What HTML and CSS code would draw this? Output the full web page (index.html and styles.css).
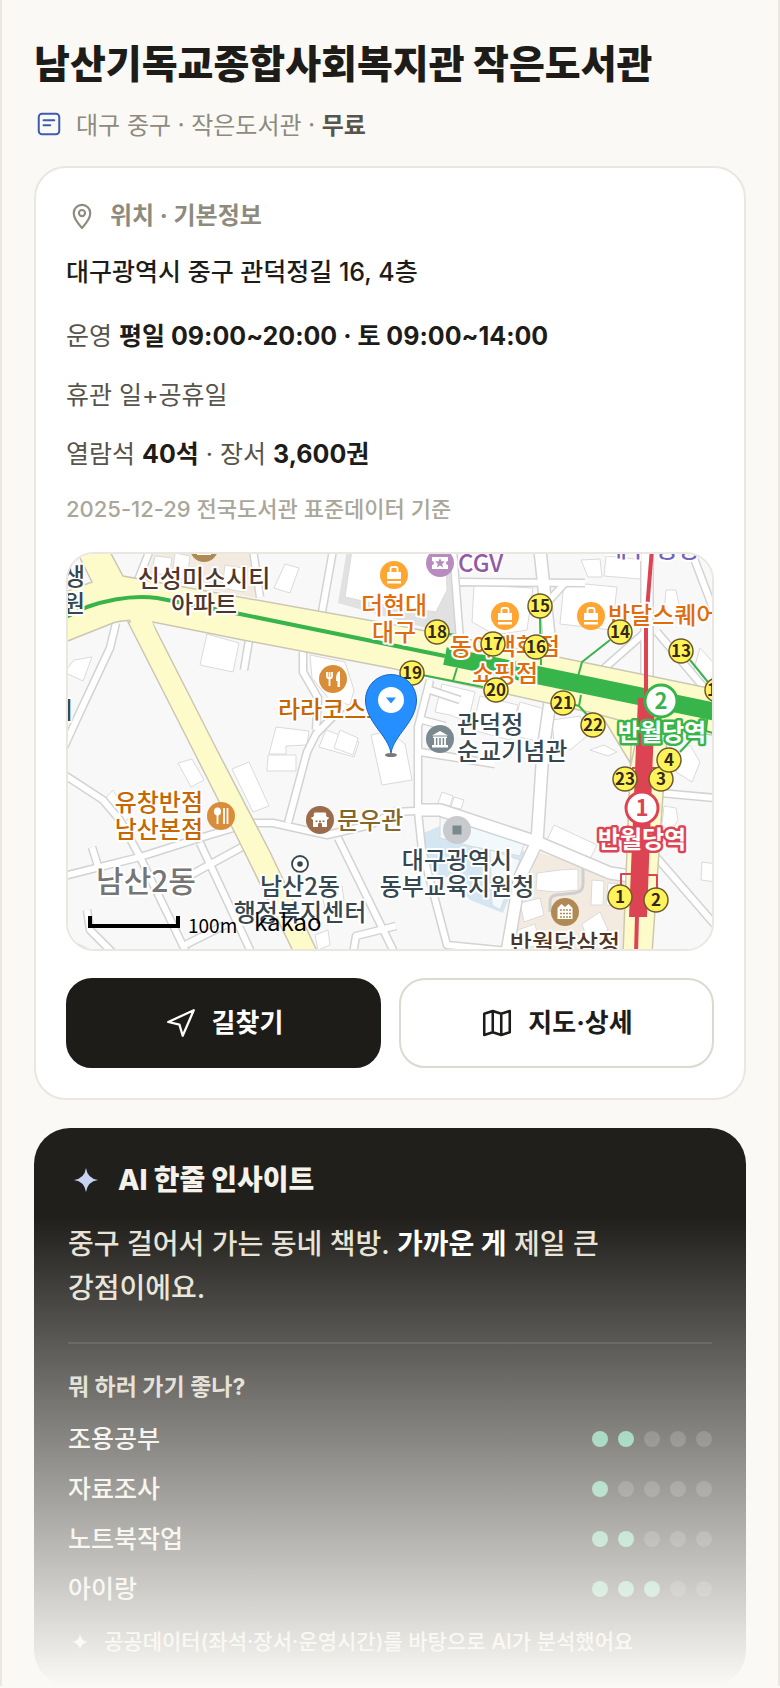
FILE: index.html
```html
<!DOCTYPE html>
<html lang="ko">
<head>
<meta charset="UTF-8" />
<meta name="viewport" content="width=device-width, initial-scale=1" />
<title>남산기독교종합사회복지관 작은도서관</title>
<link rel="stylesheet" href="styles.css">
</head>
<body>
<main class="page">
  <h1 class="title">남산기독교종합사회복지관 작은도서관</h1>
  <p class="meta">
    <svg class="icon icon-doc" viewBox="0 0 24 24" aria-hidden="true">
      <rect x="3.8" y="3.8" width="16.4" height="16.4" rx="2.6"/>
      <path d="M7.6 9h8.6M7.6 13h5.4"/>
    </svg>
    <span>대구 중구 · 작은도서관 · <b>무료</b></span>
  </p>

  <section class="card">
    <h2 class="card-head">
      <svg class="icon icon-pin" viewBox="0 0 24 24" aria-hidden="true">
        <path d="M12 21C8 16.600 5.800 13.400 5.800 9.900a6.200 6.200 0 0 1 12.400 0C18.200 13.400 16 16.600 12 21z"/>
        <circle cx="12" cy="9.800" r="2.300"/>
      </svg>
      위치 · 기본정보
    </h2>
    <p class="address">대구광역시 중구 관덕정길 16, 4층</p>
    <p class="row">운영 <b>평일 09:00~20:00 · 토 09:00~14:00</b></p>
    <p class="row">휴관 일+공휴일</p>
    <p class="row">열람석 <b>40석</b> · 장서 <b>3,600권</b></p>
    <p class="note">2025-12-29 전국도서관 표준데이터 기준</p>

    <div class="map">
      <svg viewBox="68 554 644 395" role="img" aria-label="지도">
        <defs>
          <g id="roads">
            <path d="M116 623L110 648 80 712 60 756M249 640L244 670M303 652V672L318 698 316 730M345 704L316 734 307 752 288 823"/>
            <path d="M60 772L103 800 120 820 140 857 187 954M60 877L140 857 203 837 250 823H273L327 835 370 825 395 812 435 810"/>
            <path d="M200 843L252 954M187 877L242 847M338 838L395 954M92 847L98 866M87 910L90 930 112 952M60 940L90 954M396 926L356 936 353 954M185 945L225 925"/>
            <path d="M430 680L418 727V812L422 850 447 945 508 951M460 582L585 583M453 550L460 640M333 550L322 612M253 550L260 597M150 550L138 580"/>
            <path d="M690 548L716 616M650 628L600 672M657 632L706 690M660 793L716 798M657 858L716 926M430 690L460 700M422 720L445 726M420 752L495 764M565 583L545 605"/>
          </g>
          <g id="mainroads">
            <path d="M540 550L550 645M551 695L543 750 537 842 520 877 507 952M417 810H440L537 842 610 873 630 876M647 550V690"/>
          </g>
          <g id="bag">
            <circle r="14"/>
            <path class="glyph" d="M-7 -3h14v7h-14zM-7 6h14v2.500h-14z"/>
            <path class="glyph-line" d="M-3.500 -3v-3q0-2 2-2h3q2 0 2 2v3"/>
          </g>
        </defs>

        <rect class="land" x="60" y="545" width="660" height="412"/>
        <path class="beige" d="M155 550H250L256 598 146 578zM537 852L627 878 622 954H508z"/>
        <path class="block" d="M347 550L338 603 458 637 450 550z"/>
        <path class="water" d="M421 834L440 826 527 852 503 913 470 900 455 880 433 873z"/>

        <g class="buildings">
          <path d="M352 550L345 597 372 603 436 612 447 590 446 550z"/>
          <path d="M66 670L74 660 92 657 83 681 68 674zM207 634L239 643 233 672 200 665zM285 564L299 568 290 593 274 588z"/>
          <path d="M155 556L172 558 169 576 152 572zM175 553L190 556 187 580 172 577zM225 565L248 569 244 592 222 588z"/>
          <path d="M310 655L345 662 354 690 350 705 330 700 312 678zM276 727L309 731 307 745 286 746 286 754 269 754zM326 730L359 742 354 757 319 747z"/>
          <path d="M178 763L192 759 204 780 191 787zM232 769L249 762 269 806 253 812zM268 755H296V771H267zM322 895L342 886 344 900 326 912zM315 935L328 930 330 945 318 950z"/>
          <path d="M113 790L104 800 111 812 122 826 132 813 120 803zM371 735L388 731 405 744 412 780 382 785zM340 730L358 738 353 755 334 748z"/>
          <path d="M474 585L533 588 527 630 495 635 472 622zM564 582L617 587 612 630 560 624zM581 560L600 559 602 577 588 577zM606 556L645 560 640 579 604 576z"/>
          <path d="M442 684L475 692 468 722 450 715 435 712zM480 696L518 705 510 740 472 730zM520 702L548 710 540 742 512 735zM552 720L580 716 588 735 570 750 554 742z"/>
          <path d="M666 590L676 590 680 610 676 620 664 612zM700 648L718 668 710 690 692 676zM676 752L690 745 700 762 692 782 676 772zM590 750L604 745 617 752 608 756z"/>
          <path d="M442 792L453 796 450 806 438 803zM454 797L464 800 461 809 451 807zM554 825L597 845 590 859 547 840zM664 806L676 808 678 820 670 833 662 824zM702 862L716 864V882L701 880z"/>
          <path d="M537 873L560 870 578 869 578 890 556 892 536 890zM592 880L604 881 603 905 591 905zM608 883L622 884 620 906 606 905zM520 903L540 898 544 915 524 922zM582 924L600 912 608 930 588 942zM518 930L535 924 540 945 516 950z"/>
          <path class="wet" d="M440 816L525 842 520 856 470 846 455 842 440 838zM490 850L520 860 500 910 492 905z"/>
        </g>

        <path class="lane" d="M583 868V884Q583 892 575 893L556 895Q550 896 550 902V912"/>

        <use class="casing" href="#roads"/>
        <use class="casing casing-wide" href="#mainroads"/>
        <use class="fill-road" href="#roads"/>
        <use class="fill-road fill-wide" href="#mainroads"/>

        <path class="avenue" d="M128 622L152 622 217 750 270 852 318 953 294 953 242 847 193 750zM632 722L668 722 652 954H623zM597 708L640 722 631 764z"/>
        <path class="avenue" d="M60 594L92 582 75 548H108L123 576 390 624 553 656 718 690V736L670 728 637 725 593 713 390 668 243 640 153 622Q128 618 113 623L60 644z"/>
        <path class="avenue-join" d="M130 618H151L155 630H133zM634 720H666L665 734H634z"/>

        <!-- line 2 -->
        <path class="line2" d="M60 620L87 607Q125 594 157 598L240 614 445 656"/>
        <path class="line2-wide" d="M445 656L716 712"/>
        <path class="line2-exit" d="M540 618L541 665M610 640L582 662 577 680M581 695L579 706 590 718M565 702L579 706M457 668L453 681M412 673L483 687M437 632L462 636 458 652M690 660L716 692M708 712L706 731 716 734M692 739L680 752"/>
        <!-- line 1 -->
        <path class="line1" d="M652 548L646 623V700M637 915L636 954"/>
        <path class="line1-wide" d="M638 698H655L647 917H629z"/>
        <path class="line1-exit" d="M621 885V874H638M647 875H657V888M632 768H660"/>

        <!-- places -->
        <g class="place">
          <g class="brown"><circle cx="204" cy="548" r="14"/><path class="glyph" d="M197 552h14v3h-14z"/></g>
          <use class="orange" href="#bag" x="394" y="575"/>
          <use class="orange" href="#bag" x="505" y="616"/>
          <use class="orange" href="#bag" x="591" y="616"/>
          <g class="violet">
            <circle cx="440" cy="563" r="14"/>
            <path class="glyph" d="M432 557h16v4a2 2 0 0 0 0 4v4h-16v-4a2 2 0 0 0 0-4z"/>
            <path d="M440 558l1.400 3.300 3.500.3-2.700 2.300.9 3.500-3.100-1.900-3.100 1.900.9-3.500-2.700-2.300 3.500-.3z"/>
          </g>
          <g class="amber">
            <circle cx="333" cy="679" r="14"/>
            <path class="glyph-line" d="M327 672v4q0 2.500 2.500 2.500t2.500-2.500v-4M329.500 672v14"/>
            <path class="glyph" d="M340 671v16h-2.500v-6H336q-.5-9 4-10z"/>
          </g>
          <g class="amber">
            <circle cx="221" cy="816" r="14"/>
            <ellipse class="glyph" cx="217.500" cy="811.500" rx="3.500" ry="4"/>
            <path class="glyph-line" d="M217.500 814v10M224 808v16M227.500 808v16"/>
          </g>
          <g class="slate">
            <circle cx="440" cy="739" r="14"/>
            <path class="glyph" d="M440 731l8 4.500h-16zM433 736.500h14v1.500h-14zM432 745h16v2.500h-16z"/>
            <path class="glyph-line" d="M435 738v7M438.300 738v7M441.700 738v7M445 738v7"/>
          </g>
          <g class="wood">
            <circle cx="320" cy="820" r="14"/>
            <path class="glyph" d="M314.500 812.500h11l1 2.500h-13zM311 817.500q3-.5 3.500-3h11q.5 2.500 3.500 3l-1 2h-16zM313 819h14v8h-14z"/>
            <path d="M318 827v-2.500a2 2 0 0 1 4 0v2.500zM315.500 820.500h2v1.500h-2zM319 820.500h2v1.500h-2zM322.500 820.500h2v1.500h-2z"/>
          </g>
          <g class="silver"><circle cx="457" cy="830" r="14"/><path d="M452.500 825.500h9v9h-9z"/></g>
          <g class="brown">
            <circle cx="565" cy="912" r="14"/>
            <path class="glyph" d="M557.500 919v-11l4-4 3.500 3 3.500-3 4 4v11z"/>
            <path class="windows" d="M560 910h11M560 913.500h11M560 917h11"/>
          </g>
          <circle class="office" cx="300" cy="864" r="8"/>
          <circle class="office-dot" cx="300" cy="864" r="2.800"/>
        </g>

        <!-- labels -->
        <g class="labels">
          <g class="t-slate">
            <text x="85" y="585" text-anchor="end">생</text>
            <text x="85" y="612" text-anchor="end">원</text>
            <text x="73" y="719" text-anchor="end">시</text>
            <text x="457" y="733">관덕정</text>
            <text x="457" y="760">순교기념관</text>
            <text x="300" y="895" text-anchor="middle">남산2동</text>
            <text x="300" y="921" text-anchor="middle">행정복지센터</text>
            <text x="457" y="869" text-anchor="middle">대구광역시</text>
            <text x="457" y="895" text-anchor="middle">동부교육지원청</text>
          </g>
          <g class="t-brown" text-anchor="middle">
            <text x="204" y="587">신성미소시티</text>
            <text x="204" y="613">아파트</text>
            <text x="565" y="952">반월당삼정</text>
          </g>
          <g class="t-orange">
            <text x="394" y="614" text-anchor="middle">더현대</text>
            <text x="394" y="641" text-anchor="middle">대구</text>
            <text x="505" y="655" text-anchor="middle">동아백화점</text>
            <text x="505" y="682" text-anchor="middle">쇼핑점</text>
            <text x="608" y="624">반달스퀘어</text>
          </g>
          <g class="t-rust">
            <text x="278" y="718">라라코스트</text>
            <text x="203" y="811" text-anchor="end">유창반점</text>
            <text x="203" y="838" text-anchor="end">남산본점</text>
          </g>
          <text class="t-violet" x="458" y="572">CGV</text>
          <text class="t-purple" x="605" y="557">대구 중앙로</text>
          <text class="t-gold" x="337" y="829">문우관</text>
          <text class="t-district" x="146" y="892" text-anchor="middle">남산2동</text>
        </g>

        <!-- subway exits -->
        <g class="exits">
          <circle cx="540" cy="606" r="12"/><text x="540" y="612">15</text>
          <circle cx="437" cy="632" r="12"/><text x="437" y="638">18</text>
          <circle cx="493" cy="644" r="12"/><text x="493" y="650">17</text>
          <circle cx="536" cy="647" r="12"/><text x="536" y="653">16</text>
          <circle cx="620" cy="632" r="12"/><text x="620" y="638">14</text>
          <circle cx="681" cy="651" r="12"/><text x="681" y="657">13</text>
          <circle cx="717" cy="690" r="12"/><text x="717" y="696">12</text>
          <circle cx="412" cy="673" r="12"/><text x="412" y="679">19</text>
          <circle cx="496" cy="690" r="12"/><text x="496" y="696">20</text>
          <circle cx="563" cy="703" r="12"/><text x="563" y="709">21</text>
          <circle cx="593" cy="725" r="12"/><text x="593" y="731">22</text>
          <circle cx="625" cy="779" r="12"/><text x="625" y="785">23</text>
          <circle cx="661" cy="779" r="12"/><text x="661" y="785">3</text>
          <circle cx="669" cy="760" r="12"/><text x="669" y="766">4</text>
          <circle cx="620" cy="897" r="12"/><text x="620" y="903">1</text>
          <circle cx="656" cy="900" r="12"/><text x="656" y="906">2</text>
        </g>

        <!-- stations -->
        <g class="station station-2">
          <circle cx="661" cy="701" r="16"/>
          <text class="num" x="661" y="709">2</text>
          <text class="name" x="662" y="741">반월당역</text>
        </g>
        <g class="station station-1">
          <circle cx="642" cy="808" r="16"/>
          <text class="num" x="642" y="816">1</text>
          <text class="name" x="642" y="848">반월당역</text>
        </g>

        <!-- marker -->
        <ellipse class="marker-shadow" cx="391" cy="755" rx="6" ry="2"/>
        <path class="marker" d="M391 753C388 735 365.500 722 365.500 700a25.500 25.500 0 0 1 51 0C416.500 722 394 735 391 753z"/>
        <circle class="marker-hole" cx="391" cy="700" r="13"/>
        <path class="marker-arrow" d="M386 697.500h10l-5 6z"/>

        <path class="scale" d="M90 916V926H178V916"/>
        <text class="scale-text" x="188" y="933">100m</text>
        <text class="brand" x="254" y="931">kakao</text>
      </svg>
    </div>

    <div class="actions">
      <button type="button" class="btn btn-dark">
        <svg class="icon icon-btn" viewBox="0 0 24 24" aria-hidden="true"><path d="M3 11.300 21 3l-7.800 18-2.300-7.900z"/></svg>
        길찾기
      </button>
      <button type="button" class="btn btn-light">
        <svg class="icon icon-btn" viewBox="0 0 24 24" aria-hidden="true"><path d="M9 3.500 3 5.500v15l6-2 6 2 6-2v-15l-6 2zM9 3.500v15M15 5.500v15"/></svg>
        지도·상세
      </button>
    </div>
  </section>

  <section class="insight">
    <h2 class="insight-head">
      <svg class="spark" viewBox="0 0 24 24" aria-hidden="true"><path d="M12 4Q13 11 20 12 13 13 12 20 11 13 4 12 11 11 12 4z"/></svg>
      AI 한줄 인사이트
    </h2>
    <p class="insight-text">중구 걸어서 가는 동네 책방. <b>가까운 게</b> 제일 큰 강점이에요.</p>
    <h3 class="insight-sub">뭐 하러 가기 좋나?</h3>
    <ul class="scores">
      <li>조용공부 <span class="dots"><i class="on"></i><i class="on"></i><i></i><i></i><i></i></span></li>
      <li>자료조사 <span class="dots"><i class="on"></i><i></i><i></i><i></i><i></i></span></li>
      <li>노트북작업 <span class="dots"><i class="on"></i><i class="on"></i><i></i><i></i><i></i></span></li>
      <li>아이랑 <span class="dots"><i class="on"></i><i class="on"></i><i class="on"></i><i></i><i></i></span></li>
    </ul>
    <p class="insight-foot">
      <svg class="spark spark-small" viewBox="0 0 24 24" aria-hidden="true"><path d="M12 4Q13 11 20 12 13 13 12 20 11 13 4 12 11 11 12 4z"/></svg>
      공공데이터(좌석·장서·운영시간)를 바탕으로 AI가 분석했어요
    </p>
  </section>
</main>
</body>
</html>
```
FILE: styles.css
```css
* { box-sizing: border-box; }
body { margin: 0; background: #faf9f5; color: #1d1c18; font-family: Inter, "Noto Sans CJK KR", sans-serif; }
h1, h2, h3, p, ul { margin: 0; padding: 0; }

.page { border: solid #e9e7df; border-width: 0 2px; padding: 40px 32px 0; }
.title { font-size: 39px; line-height: 48px; font-weight: 800; }
.meta { display: flex; align-items: center; gap: 12px; margin: 18px 0 24px; font-family: "Noto Sans CJK KR", sans-serif; font-size: 24px; line-height: 36px; color: #8e8a7e; }
.meta b { color: #57544b; font-weight: 700; }

.icon { flex: none; fill: none; stroke: currentColor; stroke-linecap: round; stroke-linejoin: round; stroke-width: 1.6; }
.icon-doc { width: 30px; height: 30px; color: #3f5bb0; }
.icon-pin { width: 32px; height: 32px; }
.icon-btn { width: 34px; height: 34px; }

.card { background: #fff; border: 2px solid #e9e7df; border-radius: 32px; padding: 30px; }
.card-head { display: flex; align-items: center; gap: 12px; font-size: 24px; line-height: 36px; font-weight: 700; color: #8e8a7e; }
.address { margin: 18px 0 24px; font-size: 25px; line-height: 40px; font-weight: 500; }
.row { margin-bottom: 19px; font-size: 25px; line-height: 40px; color: #57544b; }
.row b { color: #1d1c18; font-weight: 700; }
.note { font-size: 22px; line-height: 32px; font-weight: 500; color: #aaa699; }

.map { margin-top: 27px; border: 2px solid #e9e7df; border-radius: 28px; overflow: hidden; }
.map svg { display: block; width: 100%; font-family: "Noto Sans CJK KR", sans-serif; }
.land { fill: #f8f8f8; }
.beige { fill: #f3ebe0; }
.block { fill: #e1e1e2; }
.water { fill: #d4e6f1; }
.buildings { fill: #fff; stroke: #dadada; }
.wet { fill: #f1f9fd; }
.lane { fill: none; stroke: #cfcfcf; stroke-width: 3; }
.casing, .fill-road { fill: none; stroke-linejoin: round; }
.casing { stroke: #d3d3d3; stroke-width: 9; }
.casing-wide { stroke-width: 14; }
.fill-road { stroke: #fff; stroke-width: 6; }
.fill-wide { stroke-width: 11; }
.avenue { fill: #fefbcb; stroke: #cbc7b2; stroke-width: 1.5; }
.avenue-join { fill: #fefbcb; }
.line1, .line2, .line2-wide, .line1-exit, .line2-exit { fill: none; stroke-linejoin: round; }
.line2, .line2-wide, .line2-exit { stroke: #38b54a; }
.line2 { stroke-width: 4; }
.line2-wide { stroke-width: 18; }
.line1, .line1-exit { stroke: #dd4453; }
.line1 { stroke-width: 4; }
.line1-wide { fill: #dd4453; }
.line1-exit, .line2-exit { stroke-width: 2; }

.place { stroke: none; }
.glyph { fill: #fff; }
.glyph-line { fill: none; stroke: #fff; stroke-width: 1.8; }
.orange { fill: #ffa632; }
.amber { fill: #d98d38; }
.violet { fill: #b98cc0; }
.brown { fill: #b08a55; }
.wood { fill: #9b6c4a; }
.slate { fill: #7a8990; }
.silver { fill: #c9cace; }
.silver path { fill: #7a8990; }
.windows { fill: none; stroke: #b08a55; stroke-width: 1.5; stroke-dasharray: 2 1; }
.office { fill: #fff; stroke: #37474f; stroke-width: 1.8; }
.office-dot { fill: #37474f; }

.labels { font-size: 24px; font-weight: 500; stroke: #fff; stroke-width: 4; stroke-linejoin: round; paint-order: stroke; }
.t-slate { fill: #37474f; }
.t-brown { fill: #4e3629; }
.t-orange { fill: #e06c0c; }
.t-rust { fill: #c76700; }
.t-violet { fill: #9459a6; }
.t-purple { fill: #7263bd; }
.t-gold { fill: #866529; }
.t-district { fill: #757575; font-size: 30px; }
.exits { font-size: 17px; font-weight: 700; text-anchor: middle; }
.exits circle { fill: #fff35a; stroke: #6d5a2c; stroke-width: 1.5; }
.exits text { fill: #33281a; }
.station { text-anchor: middle; font-weight: 700; }
.station circle { fill: #fff; stroke-width: 3; }
.num { font-size: 22px; }
.name { font-size: 24px; fill: #fff; stroke-width: 5; stroke-linejoin: round; paint-order: stroke; }
.station-2 circle, .station-2 .name { stroke: #38b54a; }
.station-2 .num { fill: #38b54a; }
.station-1 circle, .station-1 .name { stroke: #dd4453; }
.station-1 .num { fill: #dd4453; }
.marker { fill: #258fff; stroke: #1467c4; }
.marker-hole { fill: #fff; }
.marker-arrow { fill: #258fff; }
.marker-shadow { fill: #777; }
.scale { fill: none; stroke: #000; stroke-width: 4; }
.scale-text { font-size: 19px; }
.brand { font-size: 24px; }

.actions { display: grid; grid-template-columns: 1fr 1fr; gap: 18px; margin-top: 27px; }
.btn { display: flex; align-items: center; justify-content: center; gap: 14px; height: 90px; border: 2px solid #1d1c18; border-radius: 26px; font: 700 26px/36px Inter, "Noto Sans CJK KR", sans-serif; cursor: pointer; }
.btn-dark { background: #1d1c18; color: #fff; }
.btn-light { background: #fff; border-color: #dbd9d0; color: #1d1c18; }
.btn-light .icon { stroke-width: 1.8; }

.insight { position: relative; margin-top: 28px; padding: 32px 34px 28px; border-radius: 36px; background: #201f1b; color: #f4f2ea; }
.insight::after { content: ""; position: absolute; inset: 0; background: linear-gradient(rgba(250, 249, 245, 0) 16%, #faf9f5); }
.insight-head { display: flex; align-items: center; gap: 14px; font-size: 28px; line-height: 40px; font-weight: 800; }
.spark { flex: none; width: 36px; height: 36px; fill: #c8d3f2; }
.spark-small { width: 24px; height: 24px; fill: #fff; }
.insight-text { margin-top: 22px; padding-bottom: 32px; border-bottom: 2px solid rgba(255, 255, 255, .1); font-size: 28px; line-height: 44px; font-weight: 500; color: #e6e2d6; word-break: keep-all; }
.insight-text b { color: #fff; }
.insight-sub { margin-top: 26px; font-size: 23px; line-height: 34px; font-weight: 700; color: #dad5c8; }
.scores { margin-top: 10px; list-style: none; }
.scores li { display: flex; align-items: center; justify-content: space-between; font-size: 25px; line-height: 50px; font-weight: 500; }
.dots { display: flex; gap: 10px; }
.dots i { width: 16px; height: 16px; border-radius: 50%; background: rgba(255, 255, 255, .16); }
.dots .on { background: #66c09a; }
.insight-foot { display: flex; align-items: center; gap: 12px; margin-top: 12px; font-size: 21px; line-height: 32px; font-weight: 500; color: #f4f2ea; }
```
